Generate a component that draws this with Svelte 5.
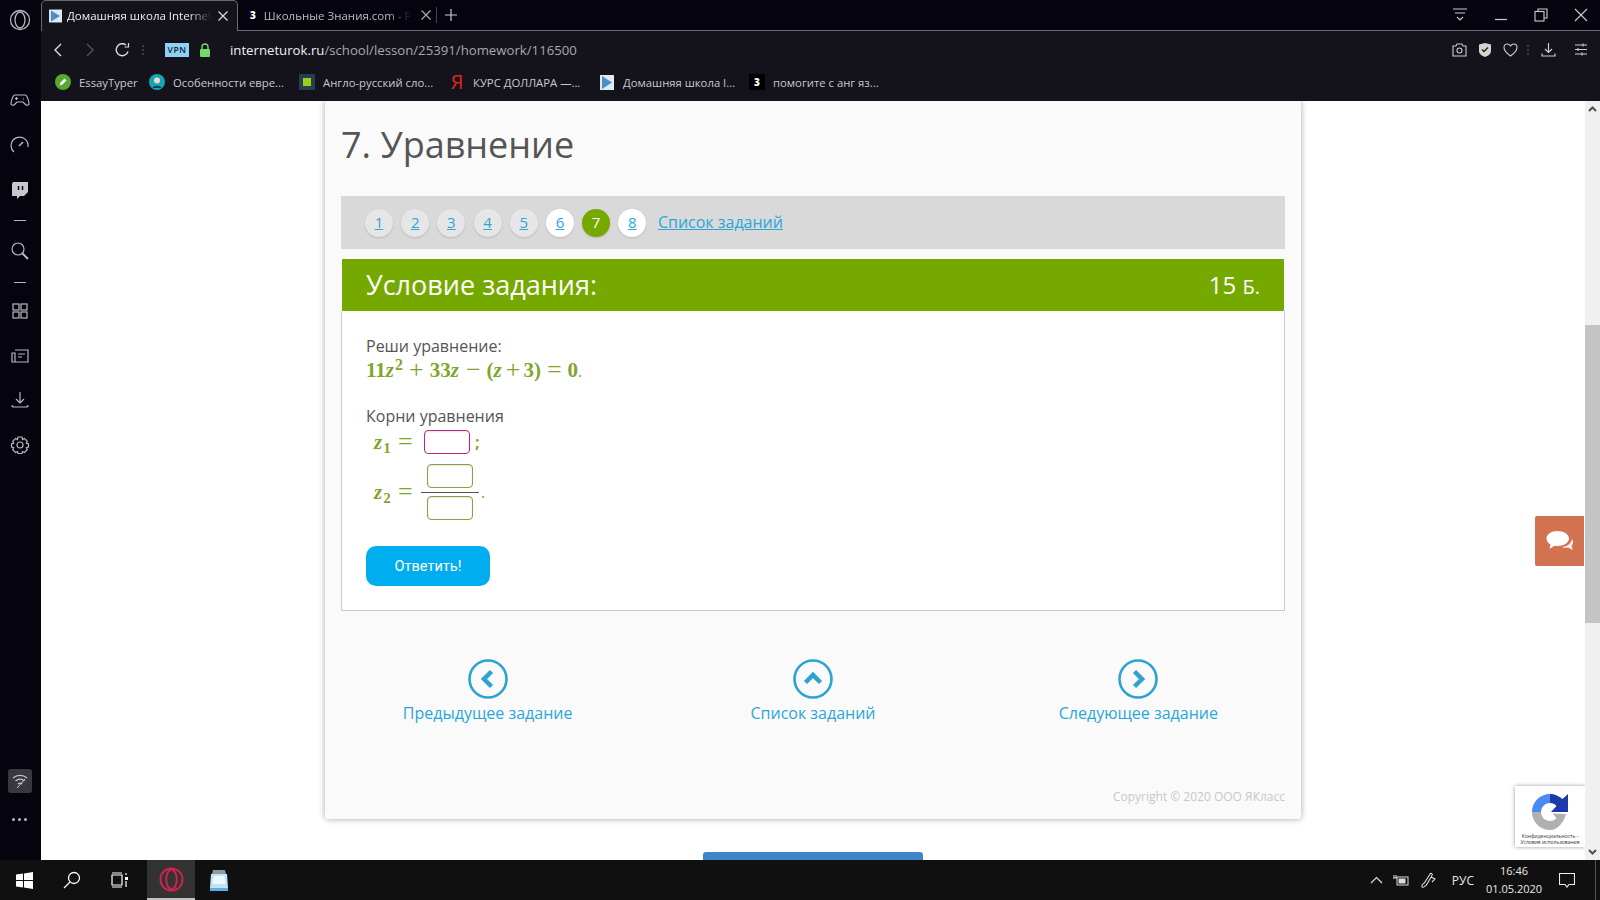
<script>
  const bookmarks = [
    { key: "pen", label: "EssayTyper" },
    { key: "face", label: "Особенности евре..." },
    { key: "square", label: "Англо-русский сло..." },
    { key: "ya", label: "КУРС ДОЛЛАРА —..." },
    { key: "play", label: "Домашняя школа I..." },
    { key: "three", label: "помогите с анг яз..." },
  ];
  const pages = [
    { n: 1, state: "done" },
    { n: 2, state: "done" },
    { n: 3, state: "done" },
    { n: 4, state: "done" },
    { n: 5, state: "done" },
    { n: 6, state: "open" },
    { n: 7, state: "current" },
    { n: 8, state: "open" },
  ];
</script>

<div class="screen">
  <div class="browser">
    <aside class="rail">
      <svg class="rail-logo" width="22" height="22" viewBox="0 0 22 22" fill="none" stroke="#b9b6bd" stroke-width="1.3"><circle cx="11" cy="11" r="9.5"/><ellipse cx="11" cy="11" rx="5" ry="8"/></svg>
      <div class="rail-tools">
        <svg width="20" height="20" viewBox="0 0 20 20" fill="none" stroke="#b9b6bd" stroke-width="1.2"><path d="M5 5h10c2 0 3 3 4 8 .3 2-2 3-3.500 1.500L13 12H7l-2.500 2.500C3 16 .7 15 1 13c1-5 2-8 4-8z"/><path d="M5 8.500h3M6.500 7v3M13 9h1"/></svg>
        <svg class="nudge" width="20" height="20" viewBox="0 0 20 20" fill="none" stroke="#b9b6bd" stroke-width="1.2"><path d="M4 17A8.500 8.500 0 1 1 18 12"/><path d="M9 11l4-4" stroke-width="1.600"/></svg>
        <svg class="nudge" width="20" height="20" viewBox="0 0 20 20"><path d="M3 2h15v10l-4 4h-4l-3 3v-3H2V4z" fill="#c9c6cc"/><path d="M8.500 6v4M12.500 6v4" stroke="#0a0812" stroke-width="1.500"/></svg>
        <i class="rail-dash first"></i>
        <svg width="20" height="20" viewBox="0 0 20 20" fill="none" stroke="#b9b6bd" stroke-width="1.2"><circle cx="8" cy="8" r="6"/><path d="M12.500 12.500L18 18" stroke-width="2"/></svg>
        <i class="rail-dash"></i>
        <svg class="lift" width="20" height="20" viewBox="0 0 20 20" fill="none" stroke="#b9b6bd" stroke-width="1.2"><rect x="3" y="3" width="6" height="6"/><rect x="11" y="3" width="6" height="6"/><rect x="3" y="11" width="6" height="6"/><rect x="11" y="11" width="6" height="6"/></svg>
        <svg class="nudge" width="20" height="20" viewBox="0 0 20 20" fill="none" stroke="#b9b6bd" stroke-width="1.2"><path d="M5 4h13v12H2V7h3v9M8 8h7M8 11h4"/></svg>
        <svg width="20" height="20" viewBox="0 0 20 20" fill="none" stroke="#b9b6bd" stroke-width="1.2"><path d="M10 2v10M6 9l4 4 4-4M2 15c0 2 1 2 2 2h12c1 0 2 0 2-2"/></svg>
        <svg class="nudge" width="20" height="20" viewBox="0 0 20 20" fill="none" stroke="#b9b6bd" stroke-width="1.2"><circle cx="10" cy="10" r="3"/><path d="M8 2h4l.500 2.500 2-1 2.800 2.800-1 2L18.500 9v3l-2.200.700 1 2-2.800 2.800-2-1L12 18.500H8l-.500-2-2 1-2.800-2.800 1-2L1.500 12V9l2.200-.700-1-2 2.800-2.800 2 1z"/></svg>
      </div>
      <div class="rail-foot">
        <span class="wifi">
          <svg width="18" height="18" viewBox="0 0 18 18" fill="none" stroke="#c9c6cc" stroke-width="1.200"><path d="M2 6c4-3.500 10-3.500 14 0M4.500 9c3-2.500 6-2.500 9 0M7 12c1.300-1 2.700-1 4 0"/><path d="M6 16l8-9" stroke-width="1"/></svg>
        </span>
        <span class="dots"><i></i><i></i><i></i></span>
      </div>
    </aside>

    <div class="window">
      <div class="tabs">
        <div class="tab active">
          <svg width="14" height="14" viewBox="0 0 14 14"><rect width="14" height="14" fill="#dfeaf3"/><path d="M2 1l10 6-10 6z" fill="#4d8ec4"/></svg>
          <span class="tab-title">Домашняя школа Internet</span>
          <svg class="tab-x" width="12" height="12" viewBox="0 0 12 12" stroke="#ddd" stroke-width="1.200"><path d="M1.500 1.500l9 9M10.500 1.500l-9 9"/></svg>
        </div>
        <div class="tab other">
          <span class="three-mark">3</span>
          <span class="tab-title">Школьные Знания.com - Р</span>
          <svg class="tab-x" width="12" height="12" viewBox="0 0 12 12" stroke="#aaa" stroke-width="1.200"><path d="M1.500 1.500l9 9M10.500 1.500l-9 9"/></svg>
        </div>
        <i class="tab-sep"></i>
        <svg class="tab-plus" width="12" height="12" viewBox="0 0 12 12" stroke="#ccc" stroke-width="1.200"><path d="M6 0v12M0 6h12"/></svg>
        <div class="win-controls">
          <svg width="16" height="14" viewBox="0 0 16 14" fill="none" stroke="#ccc" stroke-width="1.100"><path d="M1 1h14M3 5h10M5 9l3 3 3-3"/></svg>
          <svg width="14" height="14" viewBox="0 0 14 14" stroke="#ccc" stroke-width="1.200"><path d="M1 11.500h12"/></svg>
          <svg width="14" height="14" viewBox="0 0 14 14" fill="none" stroke="#ccc" stroke-width="1.100"><rect x="1" y="3.500" width="9" height="9.500"/><path d="M4 3V1h9v9h-3"/></svg>
          <svg width="14" height="14" viewBox="0 0 14 14" stroke="#ccc" stroke-width="1.100"><path d="M1 1l12 12M13 1L1 13"/></svg>
        </div>
      </div>

      <div class="toolbar">
        <svg class="nav-back" width="10" height="14" viewBox="0 0 10 14" fill="none" stroke="#ddd" stroke-width="1.400"><path d="M8 1L2 7l6 6"/></svg>
        <svg class="nav-fwd" width="10" height="14" viewBox="0 0 10 14" fill="none" stroke="#55535a" stroke-width="1.400"><path d="M2 1l6 6-6 6"/></svg>
        <svg class="nav-reload" width="15" height="15" viewBox="0 0 15 15" fill="none" stroke="#ddd" stroke-width="1.400"><path d="M13 9.500A6 6 0 1 1 11 3"/><path d="M13.500 1v4h-4" stroke-width="1.200"/></svg>
        <span class="vdots"></span>
        <span class="vpn">VPN</span>
        <svg class="lock" width="12" height="14" viewBox="0 0 12 14"><rect x="1" y="6" width="10" height="8" rx="1" fill="#6fdc6a"/><path d="M3 6V4a3 3 0 0 1 6 0v2" fill="none" stroke="#6fdc6a" stroke-width="1.400"/></svg>
        <span class="url"><b>interneturok.ru</b>/school/lesson/25391/homework/116500</span>
        <div class="tool-icons">
          <svg width="15" height="14" viewBox="0 0 15 14" fill="none" stroke="#ccc" stroke-width="1.100"><path d="M1 3h3l1-2h5l1 2h3v10H1z"/><circle cx="7.500" cy="7.500" r="2.500"/></svg>
          <svg width="14" height="15" viewBox="0 0 14 15"><path d="M1 2.500L7 1l6 1.500V9c0 3-3 5-6 6-3-1-6-3-6-6z" fill="#d9d2cf"/><path d="M4 7.500l2 2 4-4" fill="none" stroke="#222" stroke-width="1.400"/></svg>
          <svg width="15" height="14" viewBox="0 0 15 14" fill="none" stroke="#ccc" stroke-width="1.100"><path d="M7.500 13C2 9 1 7 1 4.500 1 2.500 2.500 1 4.200 1c1.400 0 2.600.800 3.300 2 .700-1.200 1.900-2 3.300-2C12.500 1 14 2.500 14 4.500 14 7 13 9 7.500 13z"/></svg>
          <span class="vdots faint"></span>
          <svg class="download" width="15" height="15" viewBox="0 0 15 15" fill="none" stroke="#ccc" stroke-width="1.200"><path d="M7.500 1v9M4 7l3.500 3.500L11 7M1 11.500V14h13v-2.500"/></svg>
          <svg width="14" height="13" viewBox="0 0 14 13" stroke="#ccc" stroke-width="1.100"><path d="M1 2h12M1 6.500h12M1 11h12"/><path d="M9 .500v3M4 5v3M8 9.500v3"/></svg>
        </div>
      </div>

      <div class="bookmarks">
        {#each bookmarks as mark}
          <span class="bookmark">
            {#if mark.key === "pen"}
              <svg width="16" height="16" viewBox="0 0 16 16"><circle cx="8" cy="8" r="8" fill="#56a82e"/><path d="M4.500 11.500l1-3 4-4 2 2-4 4z" fill="#fff"/></svg>
            {:else if mark.key === "face"}
              <svg width="16" height="16" viewBox="0 0 16 16"><circle cx="8" cy="8" r="8" fill="#17a4b8"/><circle cx="8" cy="6.500" r="3" fill="#f2dcc9"/><path d="M3.500 14c1-3 8-3 9 0z" fill="#173a56"/></svg>
            {:else if mark.key === "square"}
              <svg width="16" height="16" viewBox="0 0 16 16"><rect width="16" height="16" fill="#24404d"/><rect x="4" y="4" width="8" height="8" fill="#9ccc1e"/></svg>
            {:else if mark.key === "ya"}
              <span class="ya">Я</span>
            {:else if mark.key === "play"}
              <svg class="narrow" width="14" height="15" viewBox="0 0 14 15"><rect width="14" height="15" fill="#dfeaf3"/><path d="M2 1l10 6.500L2 14z" fill="#4d8ec4"/></svg>
            {:else}
              <span class="three-mark boxed">3</span>
            {/if}
            {mark.label}
          </span>
        {/each}
      </div>

      <div class="viewport">
        <main class="page">
          <section class="card">
            <h1>7. Уравнение</h1>
            <nav class="pager">
              {#each pages as page}
                <a class="dot {page.state}" href="#task">{page.n}</a>
              {/each}
              <a class="pager-list" href="#list">Список заданий</a>
            </nav>

            <header class="task-head">
              <h2>Условие задания:</h2>
              <span class="score">15 <small>Б.</small></span>
            </header>

            <div class="task">
              <p>Реши уравнение:</p>
              <p class="math eq">
                <b>11</b><i>z</i><sup>2</sup><b class="op">+</b><b>33</b><i>z</i><b class="op">−</b><b>(</b><i>z</i><b class="op tight">+</b><b>3</b><b>)</b><b class="op">=</b><b>0</b><span class="dot-end">.</span>
              </p>
              <p class="roots">Корни уравнения</p>
              <div class="math row one">
                <span class="var"><i>z</i><sub>1</sub></span><b class="op">=</b>
                <span class="box pink"></span><span class="semi">;</span>
              </div>
              <div class="math row two">
                <span class="var"><i>z</i><sub>2</sub></span><b class="op">=</b>
                <span class="fraction"><span class="box"></span><span class="box"></span></span><span class="dot-end">.</span>
              </div>
              <button class="submit" type="button">Ответить!</button>
            </div>

            <div class="links">
              <a href="#prev">
                <svg width="40" height="40" viewBox="0 0 40 40" fill="none" stroke="#2ca3d1"><circle cx="20" cy="20" r="18.500" stroke-width="2.600"/><path d="M23.500 12.500L16 20l7.500 7.500" stroke-width="4.500"/></svg>
                Предыдущее задание
              </a>
              <a href="#list">
                <svg width="40" height="40" viewBox="0 0 40 40" fill="none" stroke="#2ca3d1"><circle cx="20" cy="20" r="18.500" stroke-width="2.600"/><path d="M12.500 23.500L20 16l7.500 7.500" stroke-width="4.500"/></svg>
                Список заданий
              </a>
              <a href="#next">
                <svg width="40" height="40" viewBox="0 0 40 40" fill="none" stroke="#2ca3d1"><circle cx="20" cy="20" r="18.500" stroke-width="2.600"/><path d="M16.500 12.500L24 20l-7.500 7.500" stroke-width="4.500"/></svg>
                Следующее задание
              </a>
            </div>

            <p class="copyright">Copyright © 2020 ООО ЯКласс</p>
          </section>
          <div class="below"></div>

          <button class="chat" type="button" aria-label="Чат">
            <svg width="28" height="22" viewBox="0 0 28 22"><path d="M26 9c1.500 2.500 1.500 5-.5 7l1.500 4-5-2.500c-2 .5-4.500.5-6-.5 4 0 9-3 10-8z" fill="#fbeee8"/><path d="M11.500 1C17.500 1 23 4 23 8.500S17.500 16 11.500 16c-1 0-2-.100-3-.3L3.500 19l1-4.500C2 13 .5 11 .5 8.500.5 4 5.500 1 11.500 1z" fill="#fff"/></svg>
          </button>

          <div class="recaptcha">
            <svg width="38" height="38" viewBox="0 0 38 38">
              <path d="M1 19C1 9 9 1 19 1v9c-5 0-9 4-9 9z" fill="#4a8af4"/>
              <path d="M19 1c5 0 9 2 12.500 5L37 1v18H20l5.500-6c-1.500-2-4-3-6.500-3z" fill="#1c3aa9"/>
              <path d="M1 19h9c0 5 4 9 9 9 3 0 5-1 6.500-3l-4-4.500L35 21c-2 8-8 16-16 16C9 37 1 29 1 19z" fill="#b0b0b0"/>
            </svg>
            <small>Конфиденциальность -<br />Условия использования</small>
          </div>
        </main>

        <div class="scrollbar">
          <svg class="arrow" width="9" height="6" viewBox="0 0 9 6" fill="none" stroke="#505050" stroke-width="2"><path d="M1 5l3.500-3.500L8 5"/></svg>
          <div class="thumb"></div>
          <svg class="arrow" width="9" height="6" viewBox="0 0 9 6" fill="none" stroke="#505050" stroke-width="2"><path d="M1 1l3.500 3.500L8 1"/></svg>
        </div>
      </div>
    </div>
  </div>

  <footer class="taskbar">
    <div class="task-left">
      <span class="task-btn">
        <svg width="17" height="17" viewBox="0 0 17 17" fill="#fff"><path d="M0 2.500l7-1v6.500H0zM8 1.400l9-1.400v8H8zM0 9h7v6.500l-7-1zM8 9h9v8l-9-1.400z"/></svg>
      </span>
      <span class="task-btn">
        <svg width="18" height="18" viewBox="0 0 18 18" fill="none" stroke="#fff" stroke-width="1.300"><circle cx="11" cy="7" r="5.500"/><path d="M7 11l-6 6"/></svg>
      </span>
      <span class="task-btn">
        <svg width="18" height="16" viewBox="0 0 18 16" fill="none" stroke="#fff" stroke-width="1.200"><path d="M1 3h10v10H1zM1 1h10M1 15h10M15 1v2M15 9v6"/><rect x="14" y="5" width="3" height="3" fill="#fff" stroke="none"/></svg>
      </span>
      <span class="task-btn running">
        <svg width="25" height="25" viewBox="0 0 26 26" fill="none" stroke="#d0234e" stroke-width="2"><circle cx="13" cy="13" r="11.500"/><ellipse cx="13" cy="13" rx="5.500" ry="10"/></svg>
      </span>
      <span class="task-btn">
        <svg width="20" height="24" viewBox="0 0 20 24"><path d="M4 2h12l1 4H3z" fill="#8c99a3"/><path d="M2 6h16l1 14H1z" fill="#bfe3f7"/><path d="M5 8h10l2 8H3z" fill="#eef9ff"/><rect x="1" y="20" width="18" height="3" fill="#5fb0e2"/></svg>
      </span>
    </div>
    <div class="tray">
      <svg width="13" height="8" viewBox="0 0 13 8" fill="none" stroke="#ddd" stroke-width="1.200"><path d="M1 7l5.500-5.500L12 7"/></svg>
      <svg width="16" height="12" viewBox="0 0 16 12"><rect x="4" y="3" width="11" height="8" fill="none" stroke="#ddd"/><rect x="5.500" y="4.500" width="7" height="5" fill="#ddd"/><path d="M0 4h4M1 1v3M3 1v3" stroke="#ddd"/></svg>
      <svg class="pen" width="17" height="17" viewBox="0 0 17 17" fill="none" stroke="#ddd" stroke-width="1.100"><path d="M2 15c-1-3 2-3 3-5l5-8c1-1.500 3 0 2 1.500L7 12c-1 2-4 4-5 3zM11 5l4 2-3 3"/></svg>
      <span class="lang">РУС</span>
      <span class="clock">16:46<br />01.05.2020</span>
      <svg class="notes" width="16" height="15" viewBox="0 0 16 15" fill="none" stroke="#eee" stroke-width="1.100"><path d="M.500.500h15v11H10l-2 2.500-2-2.500H.500z"/></svg>
      <i class="peek"></i>
    </div>
  </footer>
</div>

<style>
  :global(body) {
    margin: 0;
    overflow: hidden;
    background: #fff;
  }
  .screen {
    width: 1600px;
    height: 900px;
    display: flex;
    flex-direction: column;
    font-family: "Open Sans", sans-serif;
    overflow: hidden;
  }
  .browser {
    flex: 1;
    min-height: 0;
    display: flex;
  }

  /* opera side rail */
  .rail {
    width: 41px;
    flex: none;
    background: #05030e;
    display: flex;
    flex-direction: column;
    align-items: center;
    padding: 9px 2px 0 0;
    box-sizing: border-box;
  }
  .rail-tools {
    margin-top: 59px;
    display: flex;
    flex-direction: column;
    align-items: center;
    gap: 24px;
  }
  .rail-tools svg {
    display: block;
  }
  .rail-tools .nudge {
    margin-top: 1px;
  }
  .rail-tools .lift {
    margin-top: -3px;
  }
  .rail-dash {
    width: 12px;
    height: 1px;
    background: #b9b6bd;
    margin: -3px 0;
  }
  .rail-dash.first {
    margin: -4px 0;
  }
  .rail-foot {
    margin-top: auto;
    padding-bottom: 39px;
    display: flex;
    flex-direction: column;
    align-items: center;
    gap: 25px;
  }
  .wifi {
    width: 24px;
    height: 24px;
    border-radius: 3px;
    background: #3a383e;
    display: flex;
    align-items: center;
    justify-content: center;
  }
  .dots {
    display: flex;
    gap: 3px;
  }
  .dots i {
    width: 3px;
    height: 3px;
    border-radius: 50%;
    background: #bbb;
  }

  .window {
    flex: 1;
    min-width: 0;
    display: flex;
    flex-direction: column;
  }

  /* tabs */
  .tabs {
    height: 31px;
    flex: none;
    display: flex;
    align-items: center;
    background: #05030e;
    border-bottom: 1px solid #6b6a70;
    box-sizing: border-box;
    position: relative;
    color: #ddd;
    font-size: 11.500px;
  }
  .tab {
    height: 31px;
    box-sizing: border-box;
    display: flex;
    align-items: center;
    gap: 5px;
    flex: none;
  }
  .tab.active {
    width: 197px;
    background: #14121b;
    border: 1px solid #6b6a70;
    border-bottom: none;
    border-radius: 5px 5px 0 0;
    padding: 0 8px 0 7px;
    margin-top: 0;
    color: #eee;
  }
  .tab.other {
    width: 198px;
    padding: 0 8px 0 12px;
    color: #bbb;
    gap: 8px;
  }
  .tab-title {
    flex: 1;
    white-space: nowrap;
    mask-image: linear-gradient(90deg, #000 84%, transparent);
  }
  .tab-x {
    flex: none;
  }
  .three-mark {
    font-weight: 800;
    font-size: 10px;
    color: #fff;
  }
  .three-mark.boxed {
    width: 16px;
    height: 16px;
    flex: none;
    background: #000;
    display: flex;
    align-items: center;
    justify-content: center;
  }
  .tab-sep {
    width: 1px;
    height: 16px;
    background: #444;
  }
  .tab-plus {
    margin-left: 8px;
  }
  .win-controls {
    margin-left: auto;
    display: flex;
    align-items: center;
    gap: 26px;
    padding-right: 12px;
  }

  /* address bar */
  .toolbar {
    height: 37px;
    flex: none;
    background: #14121b;
    display: flex;
    align-items: center;
    color: #aaa;
    font-size: 13px;
  }
  .nav-back {
    margin-left: 12px;
  }
  .nav-fwd {
    margin-left: 22px;
  }
  .nav-reload {
    margin-left: 20px;
  }
  .vdots {
    width: 2px;
    height: 10px;
    margin-left: 12px;
    background: repeating-linear-gradient(#3c3a42 0 2px, transparent 2px 4px);
  }
  .vpn {
    margin-left: 21px;
    width: 24px;
    height: 14px;
    background: #8fd0f5;
    color: #123;
    font-size: 8.500px;
    font-weight: 600;
    letter-spacing: .6px;
    line-height: 14px;
    text-align: center;
  }
  .lock {
    margin-left: 10px;
  }
  .url {
    margin-left: 19px;
    color: #a9a8ad;
    font-size: 13.200px;
    white-space: nowrap;
  }
  .url b {
    color: #f0f0f0;
    font-weight: 400;
  }
  .tool-icons {
    margin-left: auto;
    display: flex;
    align-items: center;
    gap: 11px;
    padding-right: 12px;
  }
  .vdots.faint {
    margin: 0 1px 0 -2px;
  }
  .download {
    margin-right: 7px;
  }

  /* bookmarks */
  .bookmarks {
    height: 33px;
    flex: none;
    box-sizing: border-box;
    padding: 0 0 5px 14px;
    background: #14121b;
    display: flex;
    align-items: center;
    gap: 15px;
    color: #c9c8cc;
    font-size: 11.300px;
    white-space: nowrap;
  }
  .bookmark {
    width: 135px;
    flex: none;
    display: flex;
    align-items: center;
    gap: 8px;
  }
  .bookmark:first-child {
    width: 79px;
  }
  .bookmark svg {
    flex: none;
  }
  .narrow {
    margin: 0 1px;
  }
  .ya {
    width: 16px;
    height: 16px;
    flex: none;
    color: #e52620;
    font-size: 20px;
    line-height: 16px;
    text-align: center;
  }

  /* page */
  .viewport {
    flex: 1;
    min-height: 0;
    display: flex;
  }
  .page {
    flex: 1;
    min-width: 0;
    background: #fff;
    position: relative;
    overflow: hidden;
    display: flex;
    flex-direction: column;
    align-items: center;
  }
  .card {
    width: 976px;
    height: 718px;
    flex: none;
    box-sizing: border-box;
    padding: 0 16px;
    background: #fafafa;
    border-radius: 0 0 3px 3px;
    box-shadow: 0 0 6px rgba(0, 0, 0, .35);
    display: flex;
    flex-direction: column;
  }
  h1 {
    margin: 18px 0 25px;
    font-size: 36px;
    line-height: 52px;
    font-weight: 400;
    color: #555;
  }
  .pager {
    height: 53px;
    flex: none;
    background: #d9d9d9;
    display: flex;
    align-items: center;
    gap: 8.200px;
    padding-left: 24px;
  }
  .dot {
    width: 28px;
    height: 28px;
    border-radius: 50%;
    font-size: 15px;
    line-height: 26px;
    text-align: center;
    color: #2aa7d8;
    box-shadow: 0 1px 2px rgba(0, 0, 0, .15);
  }
  .dot.done {
    background: #e6e6e6;
  }
  .dot.open {
    background: #fff;
  }
  .dot.current {
    background: #76a900;
    color: #fff;
    text-decoration: none;
  }
  .pager-list {
    margin: 0 0 2px 3.400px;
    font-size: 16px;
    color: #2aa7d8;
  }
  .task-head {
    height: 52px;
    flex: none;
    box-sizing: border-box;
    margin: 10px 1px 0 1px;
    background: #76a900;
    color: #fff;
    display: flex;
    align-items: center;
    justify-content: space-between;
    padding: 0 24px 2px;
  }
  h2 {
    margin: 0;
    font-size: 27px;
    font-weight: 400;
  }
  .score {
    font-size: 24px;
  }
  .score small {
    font-size: 20px;
  }
  .task {
    height: 300px;
    flex: none;
    box-sizing: border-box;
    background: #fff;
    border: 1px solid #ccc;
    border-top: none;
    padding: 23px 24px 0;
    color: #555;
    font-size: 16px;
    line-height: 24px;
  }
  .task p {
    margin: 0;
  }
  .math {
    color: #7fa52d;
    font-family: "Liberation Serif", serif;
    font-size: 21px;
    white-space: nowrap;
  }
  .math b {
    font-weight: 700;
  }
  .math i {
    font-weight: 700;
    margin-right: 1px;
  }
  .math sup {
    font-size: 16px;
    font-weight: 700;
    line-height: 0;
    vertical-align: 7px;
  }
  .math sub {
    font-size: 15px;
    font-weight: 700;
    line-height: 0;
    vertical-align: -4px;
  }
  .math .op {
    margin: 0 6px;
    font-size: 26px;
    line-height: 0;
    font-weight: 400;
    vertical-align: -1px;
  }
  .math .op.tight {
    margin: 0 3px;
  }
  .dot-end {
    font-family: "Open Sans", sans-serif;
    font-size: 16px;
    color: #7fa52d;
  }
  .row .dot-end {
    margin-left: 2px;
  }
  .task p.roots {
    margin-top: 21px;
  }
  .row {
    display: flex;
    align-items: center;
    padding-left: 8px;
  }
  .row.one {
    height: 26px;
    margin-top: 1px;
  }
  .row.one .box {
    margin-left: 3px;
  }
  .row.two {
    margin-top: 9px;
    height: 56px;
  }
  .var {
    width: 23px;
  }
  .math.row .op {
    margin: 0 0 0 1px;
    width: 23px;
  }
  .box {
    width: 46px;
    height: 24px;
    box-sizing: border-box;
    display: block;
    background: #fff;
    border: 1px solid #86a43a;
    border-radius: 4px;
    box-shadow: inset 0 1px 2px rgba(0, 0, 0, .12);
  }
  .box.pink {
    border-color: #c0267f;
  }
  .semi {
    margin-left: 5px;
    font-size: 16px;
    font-weight: 700;
    font-family: "Open Sans", sans-serif;
  }
  .fraction {
    width: 58px;
    display: flex;
    flex-direction: column;
    align-items: center;
    gap: 8px;
    background: linear-gradient(#555, #555) center / 100% 1px no-repeat;
  }
  .submit {
    display: block;
    margin-top: 26px;
    width: 124px;
    height: 40px;
    border: none;
    border-radius: 10px;
    background: #00aeef;
    color: #fff;
    font-family: "Roboto", sans-serif;
    font-size: 14.500px;
  }

  /* prev / list / next */
  .links {
    margin: 48px -16px 0;
    display: grid;
    grid-template-columns: repeat(3, 1fr);
  }
  .links a {
    display: flex;
    flex-direction: column;
    align-items: center;
    color: #2aa7d8;
    font-size: 16px;
    line-height: 28px;
    text-decoration: none;
  }
  .copyright {
    margin: auto 0 14px;
    text-align: right;
    font-size: 12px;
    line-height: 16px;
    color: #c8c8c8;
  }
  .below {
    width: 220px;
    height: 8px;
    flex: none;
    margin-top: 33px;
    background: #3f86c6;
    border-radius: 3px 3px 0 0;
  }

  /* overlays */
  .chat {
    position: absolute;
    top: 415px;
    right: 1px;
    width: 49px;
    height: 50px;
    border: none;
    border-radius: 2px 0 0 2px;
    background: #d37250;
    display: flex;
    align-items: center;
    justify-content: center;
    padding: 0;
  }
  .recaptcha {
    position: absolute;
    top: 685px;
    right: 0;
    width: 70px;
    height: 61px;
    box-sizing: border-box;
    padding-top: 7px;
    background: #fff;
    box-shadow: 0 0 4px rgba(0, 0, 0, .4);
    text-align: center;
    display: flex;
    flex-direction: column;
    align-items: center;
  }
  .recaptcha small {
    font-size: 5px;
    line-height: 6px;
    color: #333;
    white-space: nowrap;
    margin-top: 2px;
  }

  .scrollbar {
    width: 15px;
    flex: none;
    background: #f0f0f0;
    display: flex;
    flex-direction: column;
    align-items: center;
    padding: 5px 0;
    box-sizing: border-box;
  }
  .arrow {
    flex: none;
  }
  .thumb {
    width: 100%;
    height: 298px;
    flex: none;
    margin: 213px 0 auto;
    background: #c4c4c4;
  }

  /* windows taskbar */
  .taskbar {
    height: 40px;
    flex: none;
    background: #101010;
    display: flex;
    align-items: center;
    justify-content: space-between;
    color: #e8e8e8;
  }
  .task-left {
    display: flex;
    height: 100%;
  }
  .task-btn {
    width: 48px;
    height: 100%;
    display: flex;
    align-items: center;
    justify-content: center;
    box-sizing: border-box;
  }
  .task-btn.running {
    margin-left: 3px;
    background: #333;
    border-bottom: 2px solid #c0c0c0;
  }
  .tray {
    height: 100%;
    display: flex;
    align-items: center;
    gap: 10px;
    padding-right: 4px;
    font-size: 12px;
  }
  .pen {
    margin-left: 1.500px;
  }
  .lang {
    margin-left: 4.500px;
  }
  .clock {
    margin-left: -5px;
    text-align: center;
    font-size: 11px;
    line-height: 18px;
    width: 70px;
  }
  .peek {
    width: 1px;
    height: 100%;
    margin-left: 10px;
    background: #555;
  }
</style>
